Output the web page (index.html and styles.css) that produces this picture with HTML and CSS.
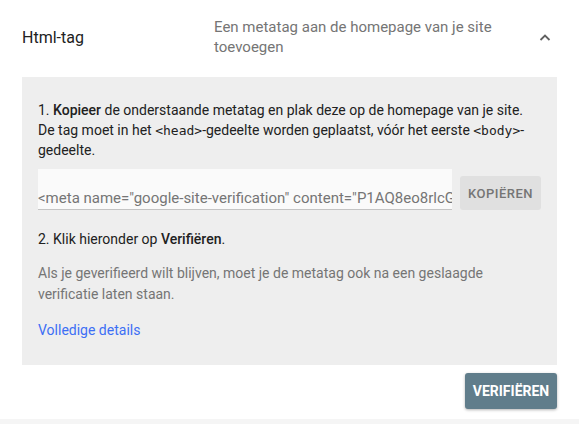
FILE: index.html
```html
<!DOCTYPE html>
<html>
<head>
    <meta charset="UTF-8">
    <meta name="viewport" content="width=device-width, initial-scale=1.0">
    <title>Html-tag</title>
    <link rel="stylesheet" href="styles.css">
</head>
<body>
    <div class="card">
        <div class="header">
            <div class="title">Html-tag</div>
            <div class="desc">Een metatag aan de homepage van je site toevoegen</div>
            <svg class="chevron" width="24" height="24" viewBox="0 0 24 24">
                <path d="M7.5 15 12 10.5 16.5 15" fill="none" stroke="#616161" stroke-width="1.8"/>
            </svg>
        </div>
        <div class="panel">
            <p class="step">1. <b>Kopieer</b> de onderstaande metatag en plak deze op de homepage van je site. De tag moet in het <code>&lt;head&gt;</code>-gedeelte worden geplaatst, vóór het eerste <code>&lt;body&gt;</code>-gedeelte.</p>
            <div class="copy-row">
                <div class="tag-input">&lt;meta name="google-site-verification" content="P1AQ8eo8rlcG5x0vR2kLm" /&gt;</div>
                <button class="copy-btn">Kopiëren</button>
            </div>
            <p class="step second">2. Klik hieronder op <b>Verifiëren</b>.</p>
            <p class="note">Als je geverifieerd wilt blijven, moet je de metatag ook na een geslaagde verificatie laten staan.</p>
            <a class="details" href="#">Volledige details</a>
        </div>
        <div class="actions">
            <button class="verify">Verifiëren</button>
        </div>
    </div>
</body>
</html>
```

FILE: styles.css
```css
body {
    margin: 0;
    background: #f5f5f5;
    font-family: Roboto, "Noto Sans", sans-serif;
}
.card {
    background: white;
    height: 419px;
}
.header {
    display: flex;
    align-items: center;
    padding: 17px 22px 20px;
}
.title {
    width: 192px;
    font-size: 16px;
    color: #212121;
}
.desc {
    flex: 1;
    font-size: 15px;
    line-height: 20px;
    color: #757575;
    padding-right: 40px;
}
.chevron {
    flex: none;
}
.panel {
    margin: 0 22px;
    background: #eeeeee;
    padding: 23px 16px 25px;
}
.step, .note {
    margin: 0;
    font-size: 14px;
    line-height: 20px;
    color: #212121;
}
.step b {
    font-weight: 500;
}
code {
    font-family: "DejaVu Sans Mono", monospace;
    font-size: 13px;
    line-height: 1;
}
.copy-row {
    display: flex;
    align-items: flex-end;
    gap: 8px;
    margin-top: 9px;
}
.tag-input {
    width: 414px;
    height: 41px;
    box-sizing: border-box;
    background: #fafafa;
    border-bottom: 1px solid #c4c4c4;
    font-size: 15px;
    line-height: 20px;
    color: #757575;
    white-space: nowrap;
    overflow: hidden;
    padding-top: 19px;
}
.copy-btn {
    width: 81px;
    height: 34px;
    border: none;
    border-radius: 3px;
    background: #e0e0e0;
    color: #757575;
    font-family: inherit;
    font-size: 13px;
    font-weight: 500;
    letter-spacing: 0.5px;
    text-transform: uppercase;
    padding: 0;
}
.second {
    margin-top: 19px;
}
.note {
    margin-top: 14px;
    color: #757575;
    line-height: 21px;
}
.details {
    display: block;
    margin-top: 15px;
    font-size: 14px;
    line-height: 20px;
    color: #3d6ef5;
    text-decoration: none;
}
.actions {
    display: flex;
    justify-content: flex-end;
    padding: 8px 22px 0;
}
.verify {
    width: 92px;
    height: 36px;
    border: none;
    border-radius: 3px;
    background: #607d8b;
    color: white;
    font-family: inherit;
    font-size: 14px;
    font-weight: 700;
    text-transform: uppercase;
    padding: 0;
    box-shadow: 0 1px 3px rgba(0, 0, 0, 0.3);
}
```
